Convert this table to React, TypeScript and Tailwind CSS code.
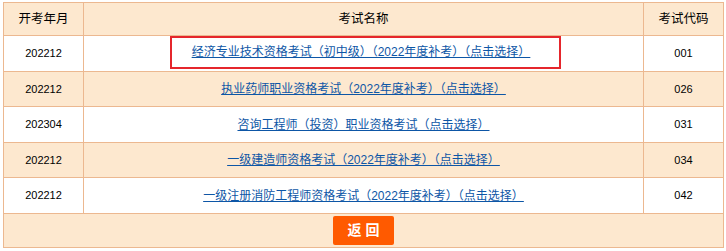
import React from "react";

const rows = [
  { month: "202212", name: "经济专业技术资格考试（初中级）（2022年度补考）（点击选择）", code: "001", hl: true, h: "h-[36px]" },
  { month: "202212", name: "执业药师职业资格考试（2022年度补考）（点击选择）", code: "026", h: "h-[35px]" },
  { month: "202304", name: "咨询工程师（投资）职业资格考试（点击选择）", code: "031", h: "h-[36px]" },
  { month: "202212", name: "一级建造师资格考试（2022年度补考）（点击选择）", code: "034", h: "h-[35px]" },
  { month: "202212", name: "一级注册消防工程师资格考试（2022年度补考）（点击选择）", code: "042", h: "h-[36px]" },
];

export default function App() {
  return (
    <div
      className="w-[726px] h-[251px] bg-white pt-[2px] pl-[3px]"
      style={{ fontFamily: '"Liberation Sans", "Noto Sans CJK SC", sans-serif' }}
    >
      <table className="w-[720px] border-collapse border border-[#ecb890] text-[12px] text-black table-fixed">
        <colgroup>
          <col className="w-[80px]" />
          <col className="w-[560px]" />
          <col className="w-[80px]" />
        </colgroup>
        <thead>
          <tr className="h-[33px] bg-[#fde8cf]">
            <th className="border border-[#ecb890] font-normal text-[12.5px] text-center">开考年月</th>
            <th className="border border-[#ecb890] font-normal text-[12.5px] text-center">考试名称</th>
            <th className="border border-[#ecb890] font-normal text-[12.5px] text-center">考试代码</th>
          </tr>
        </thead>
        <tbody>
          {rows.map((r, i) => (
            <tr key={i} className={`${r.h} ${i % 2 === 1 ? "bg-[#fde8cf]" : "bg-white"}`}>
              <td className="border border-[#ecb890] text-center text-[11px]">{r.month}</td>
              <td className="border border-[#ecb890] text-center">
                {r.hl ? (
                  <span className="inline-block border-2 border-[#e5262c] ml-[4px] pl-[20px] pr-[29px] pt-[5px] pb-[6px] -mt-[2px] align-middle">
                    <a href="#" className="text-[#0d56a6] underline">{r.name}</a>
                  </span>
                ) : (
                  <a href="#" className="text-[#0d56a6] underline">{r.name}</a>
                )}
              </td>
              <td className="border border-[#ecb890] text-center text-[11px]">{r.code}</td>
            </tr>
          ))}
          <tr className="h-[34px] bg-[#fde8cf]">
            <td colSpan={3} className="border border-[#ecb890] text-center align-middle">
              <button className="inline-flex items-center justify-center w-[61px] h-[29px] rounded-[2px] bg-[#ff5a00] text-white text-[14px] font-bold tracking-[4px] pl-[4px]">
                返回
              </button>
            </td>
          </tr>
        </tbody>
      </table>
    </div>
  );
}
